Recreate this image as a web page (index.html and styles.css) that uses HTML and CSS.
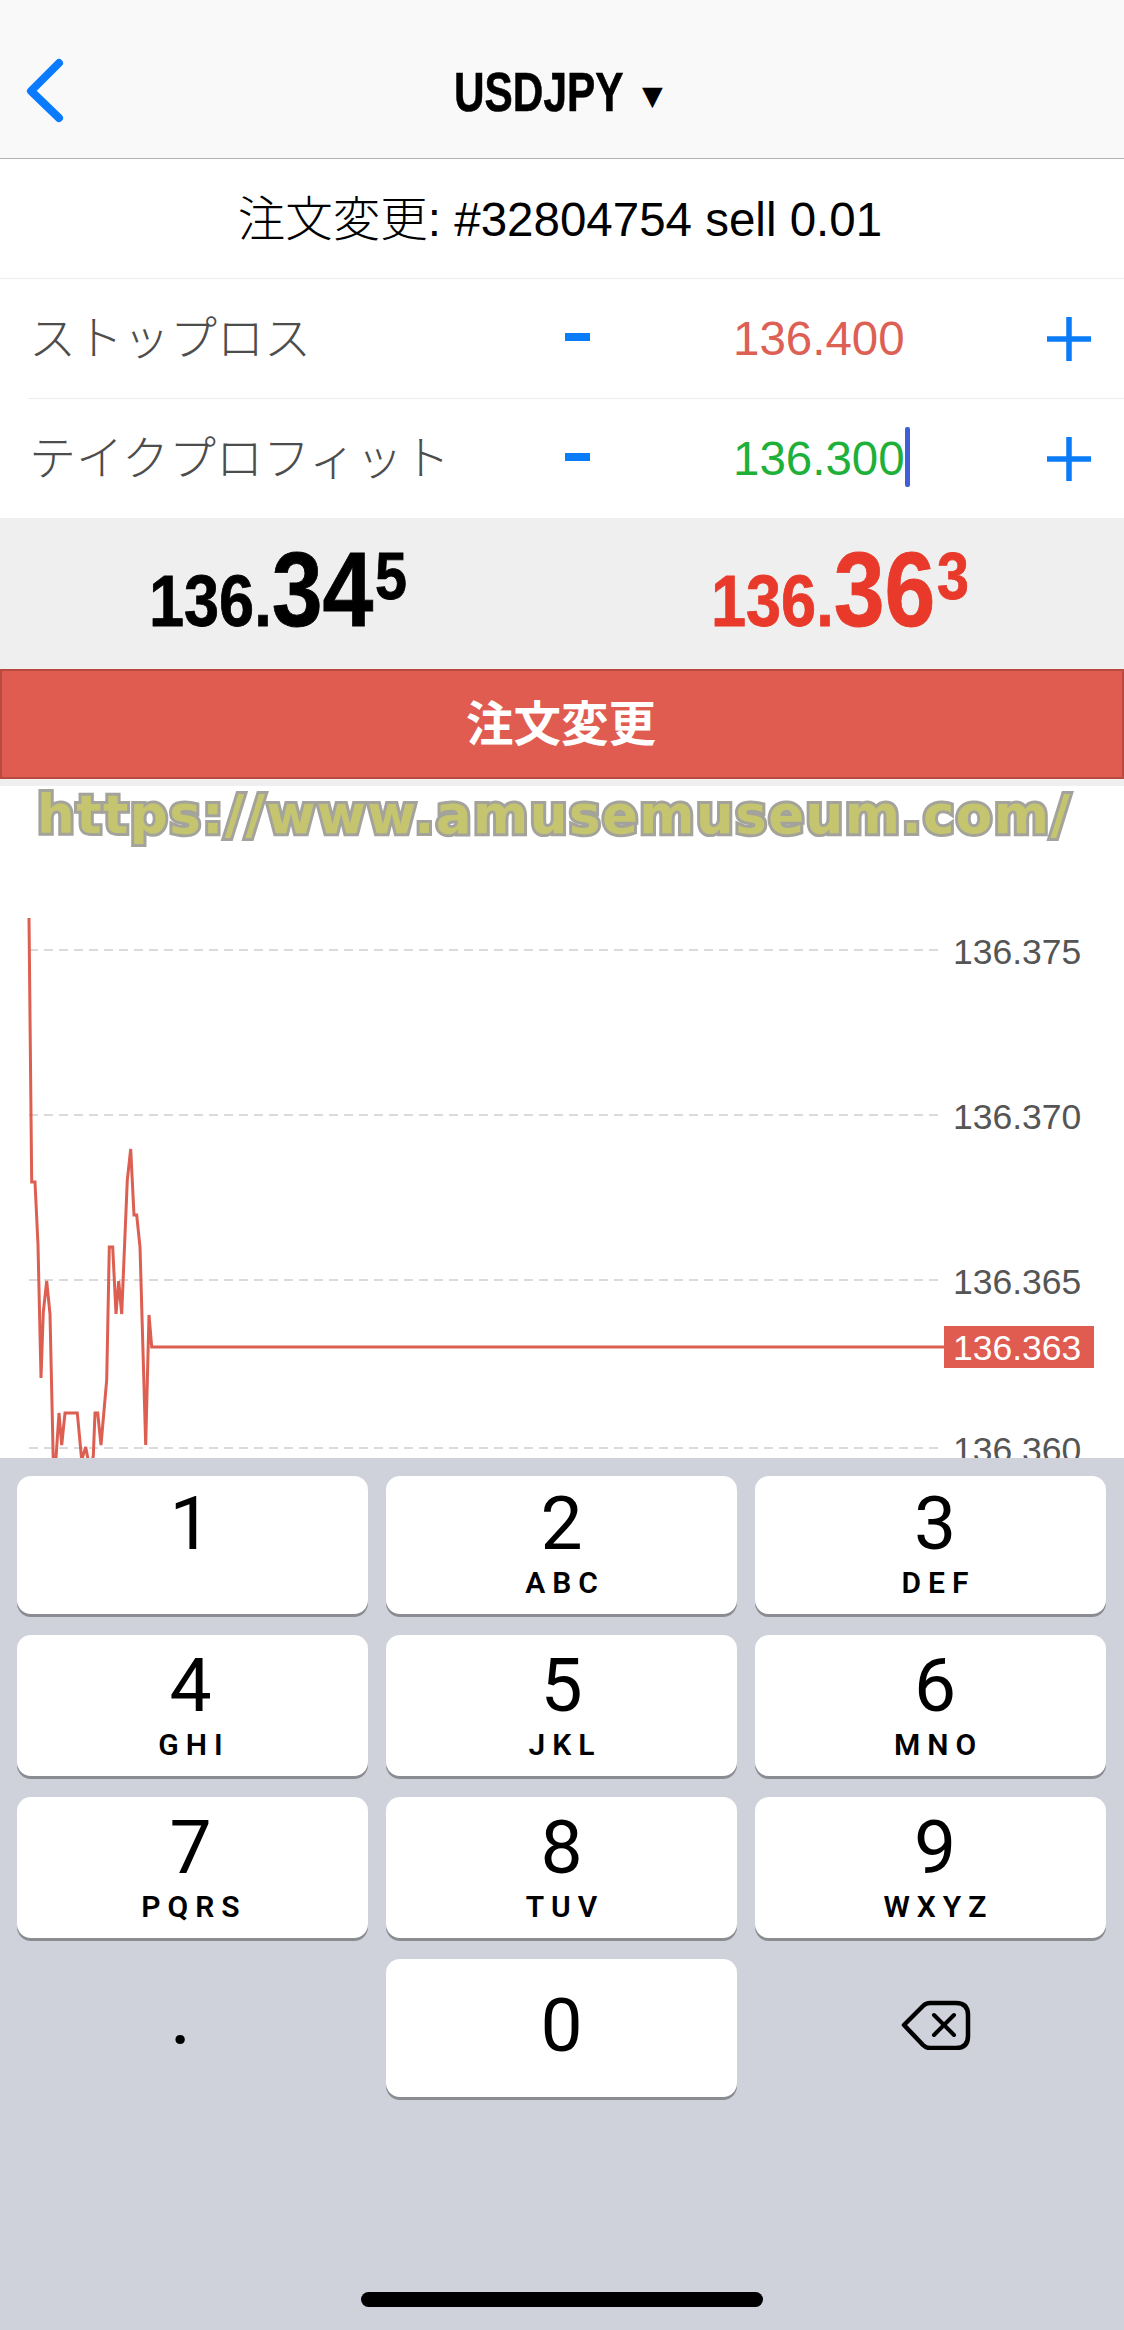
FILE: index.html
```html
<!DOCTYPE html>
<html lang="ja">
<head>
<meta charset="utf-8">
<title>USDJPY</title>
<link rel="stylesheet" href="styles.css">
</head>
<body>
<div class="screen">
  <header class="nav">
    <svg class="back" width="40" height="70" viewBox="0 0 40 70"><path d="M33 7 L5 35 L33 62" fill="none" stroke="#0a7aff" stroke-width="8" stroke-linecap="round" stroke-linejoin="round"/></svg>
    <div class="symbol"><span class="symbol-name">USDJPY</span><span class="symbol-arrow">▼</span></div>
  </header>
  <div class="order-title">注文変更: #32804754 sell 0.01</div>
  <div class="level level-first">
    <div class="level-label">ストップロス</div>
    <div class="minus"></div>
    <div class="level-value value-sl">136.400</div>
    <svg class="plus" width="44" height="44" viewBox="0 0 44 44"><path d="M22 0V44M0 22H44" stroke="#0a7cf7" stroke-width="5.5"/></svg>
  </div>
  <div class="level">
    <div class="level-label">テイクプロフィット</div>
    <div class="minus"></div>
    <div class="level-value value-tp">136.300<span class="caret"></span></div>
    <svg class="plus" width="44" height="44" viewBox="0 0 44 44"><path d="M22 0V44M0 22H44" stroke="#0a7cf7" stroke-width="5.5"/></svg>
  </div>
  <section class="trade">
    <div class="quotes">
      <div class="quote"><span class="q-small">136.</span><span class="q-big">34</span><span class="q-sup">5</span></div>
      <div class="quote quote-ask"><span class="q-small">136.</span><span class="q-big">36</span><span class="q-sup">3</span></div>
    </div>
    <div class="submit">注文変更</div>
  </section>
  <div class="watermark">https://www.amusemuseum.com/</div>
  <svg class="chart" width="1124" height="608" viewBox="0 850 1124 608">
    <g class="grid">
      <line x1="29" y1="950" x2="940" y2="950"/>
      <line x1="29" y1="1115" x2="940" y2="1115"/>
      <line x1="29" y1="1280" x2="940" y2="1280"/>
      <line x1="29" y1="1448" x2="940" y2="1448"/>
    </g>
    <polyline class="price-line" points="29,918 31.7,1182 35,1182 38,1245 41,1378 43.3,1312 46.7,1281 50,1314 53.3,1462 56,1458 59,1413 61.7,1445 65,1413 77.3,1413 81.7,1460 85.7,1447 90,1470 93.3,1456 95,1413 97.7,1413 101,1445 106.7,1380 109.3,1247 112.7,1247 116,1314 118.7,1281 121.7,1314 127.3,1180 130.7,1149 134,1215 136.7,1215 140,1247 145.7,1445 149,1315 151.7,1347 944,1347"/>
    <text class="axis" x="953" y="964">136.375</text>
    <text class="axis" x="953" y="1129">136.370</text>
    <text class="axis" x="953" y="1294">136.365</text>
    <text class="axis" x="953" y="1462">136.360</text>
    <rect class="tag" x="944" y="1326" width="150" height="42"/>
    <text class="tag-text" x="953" y="1360">136.363</text>
  </svg>
  <section class="keyboard">
    <div class="keys">
      <div class="key key-top key-left"><span class="digit">1</span></div>
      <div class="key key-top"><span class="digit">2</span><span class="letters">ABC</span></div>
      <div class="key key-top key-right"><span class="digit">3</span><span class="letters">DEF</span></div>
      <div class="key key-left"><span class="digit">4</span><span class="letters">GHI</span></div>
      <div class="key"><span class="digit">5</span><span class="letters">JKL</span></div>
      <div class="key key-right"><span class="digit">6</span><span class="letters">MNO</span></div>
      <div class="key key-left"><span class="digit">7</span><span class="letters">PQRS</span></div>
      <div class="key"><span class="digit">8</span><span class="letters">TUV</span></div>
      <div class="key key-right"><span class="digit">9</span><span class="letters">WXYZ</span></div>
      <div class="key-plain key-dot">.</div>
      <div class="key key-zero"><span class="digit">0</span></div>
      <div class="key-plain key-delete">
        <svg width="70" height="50" viewBox="0 0 70 50"><path d="M3 25 L22 6 Q25 3 29 3 L55 3 Q67 3 67 15 L67 36 Q67 48 55 48 L29 48 Q25 48 22 45 Z" fill="none" stroke="#000" stroke-width="4.5" stroke-linejoin="round"/><path d="M33 15 L53 35 M53 15 L33 35" fill="none" stroke="#000" stroke-width="4" stroke-linecap="round"/></svg>
      </div>
    </div>
    <div class="home-bar"></div>
  </section>
</div>
</body>
</html>
```

FILE: styles.css
```css
* { box-sizing: border-box; }
html, body { margin: 0; padding: 0; background: #fff; }
.screen {
  width: 1124px;
  height: 2330px;
  overflow: hidden;
  display: flex;
  flex-direction: column;
  font-family: "Liberation Sans", "Noto Sans CJK JP", sans-serif;
}

/* nav */
.nav {
  height: 159px;
  flex: none;
  background: #f9f9f9;
  border-bottom: 1px solid #b2b2b2;
  display: grid;
  grid-template-columns: 1fr auto 1fr;
  align-items: center;
  padding: 26px 0 0 26px;
}
.back { display: block; margin-bottom: 2px; }
.symbol { display: flex; align-items: center; gap: 20px; margin-left: -33px; }
.symbol-name {
  display: inline-block;
  font-size: 55px;
  line-height: 60px;
  font-weight: 700;
  color: #000;
  width: 168px;
  white-space: nowrap;
  -webkit-text-stroke: .6px #000;
  transform: scaleX(.77);
  transform-origin: left center;
}
.symbol-arrow {
  font-family: "DejaVu Sans", sans-serif;
  font-size: 27px;
  line-height: 30px;
  color: #000;
  margin-top: 8px;
}

/* order rows */
.order-title {
  height: 120px;
  flex: none;
  display: flex;
  align-items: center;
  justify-content: center;
  font-size: 47.5px;
  font-weight: 300;
  color: #000;
  border-bottom: 1px solid #ececec;
  padding: 0 4px 6px 0;
}
.level {
  height: 119px;
  flex: none;
  display: flex;
  align-items: center;
  margin-left: 28px;
  padding-left: 1px;
}
.level-first {
  height: 120px;
  border-bottom: 1px solid #ececec;
}
.level-label {
  width: 536px;
  font-size: 47px;
  font-weight: 300;
  color: #4d4d4d;
  white-space: nowrap;
  padding-bottom: 8px;
}
.minus {
  width: 25px;
  height: 8px;
  background: #0a7cf7;
  margin-top: -3px;
  margin-right: 143px;
}
.level-value {
  width: 170px;
  display: flex;
  align-items: center;
  font-size: 47.5px;
  line-height: 60px;
}
.value-sl { color: #dd6054; }
.value-tp { color: #1fb03a; }
.caret {
  flex: none;
  width: 5px;
  height: 60px;
  border-radius: 2px;
  background: #3f5fd8;
  margin-top: -4px;
}
.plus { display: block; margin-left: auto; margin-right: 33px; }

/* quotes */
.trade { flex: none; background: #efefef; padding-bottom: 7px; }
.quotes { display: flex; height: 151px; padding-top: 19px; }
.quote {
  flex: 1;
  display: flex;
  justify-content: center;
  align-items: baseline;
  font-weight: 700;
  color: #000;
  transform: scaleX(.87);
  height: 105px;
  padding-right: 7px;
  -webkit-text-stroke: .8px currentColor;
}
.quote-ask { color: #e8392a; }
.q-small { font-size: 72.5px; line-height: 1; }
.q-big { font-size: 105px; line-height: 1; }
.q-sup { font-size: 66px; line-height: 1; align-self: flex-start; margin-top: 6px; margin-left: 2px; }
.submit {
  height: 110px;
  background: #e05c50;
  border: 2px solid #b94a40;
  display: flex;
  align-items: center;
  justify-content: center;
  font-size: 47.5px;
  font-weight: 700;
  color: #fff;
  padding: 0 2px 7px 0;
}

/* watermark + chart */
.watermark {
  height: 64px;
  flex: none;
  padding-left: 37px;
  font-family: "DejaVu Sans", sans-serif;
  font-weight: 700;
  font-size: 53px;
  line-height: 57px;
  letter-spacing: 1.45px;
  white-space: nowrap;
  color: #c5c56f;
  -webkit-text-stroke: 6px #a3a39c;
  paint-order: stroke fill;
}
.chart { display: block; flex: none; }
.grid line { stroke: #cfcfcf; stroke-width: 1.5; stroke-dasharray: 9 6; }
.price-line { fill: none; stroke: #dc5f52; stroke-width: 3; stroke-linejoin: miter; }
.axis { font-size: 35.5px; fill: #555; }
.tag { fill: #e05c50; }
.tag-text { font-size: 35.5px; fill: #fff; }

/* keyboard */
.keyboard {
  flex: 1;
  min-height: 0;
  background: #cfd2da;
  display: flex;
  flex-direction: column;
  padding-top: 18px;
}
.keys {
  display: grid;
  grid-template-columns: repeat(3, 351px);
  grid-template-rows: 138px 141px 141px 138px;
  column-gap: 18px;
  row-gap: 21px;
  padding-left: 17px;
}
.key {
  background: #fff;
  border-radius: 14px;
  box-shadow: 0 3px 0 #8b8c92;
  display: flex;
  flex-direction: column;
  align-items: center;
  padding-top: 10px;
  font-family: Roboto, "Liberation Sans", sans-serif;
  color: #000;
}
.key-top { padding-top: 7px; }
.key-zero { padding-top: 26px; }
.key-left { padding-right: 4px; }
.key-right { padding-left: 9px; }
.key-plain {
  display: flex;
  align-items: center;
  justify-content: center;
}
.key-delete { padding: 0 0 6px 11px; }
.key-dot {
  font-family: Roboto, sans-serif;
  font-size: 84px;
  line-height: 60px;
  padding: 0 24px 24px 0;
  color: #000;
}
.digit { font-size: 75px; line-height: 80px; font-weight: 400; }
.letters {
  font-size: 30px;
  line-height: 34px;
  font-weight: 600;
  letter-spacing: 7px;
  margin-right: -7px;
  margin-top: 3px;
}
.home-bar {
  width: 402px;
  height: 15px;
  border-radius: 8px;
  background: #000;
  margin: auto auto 23px 361px;
}
```
